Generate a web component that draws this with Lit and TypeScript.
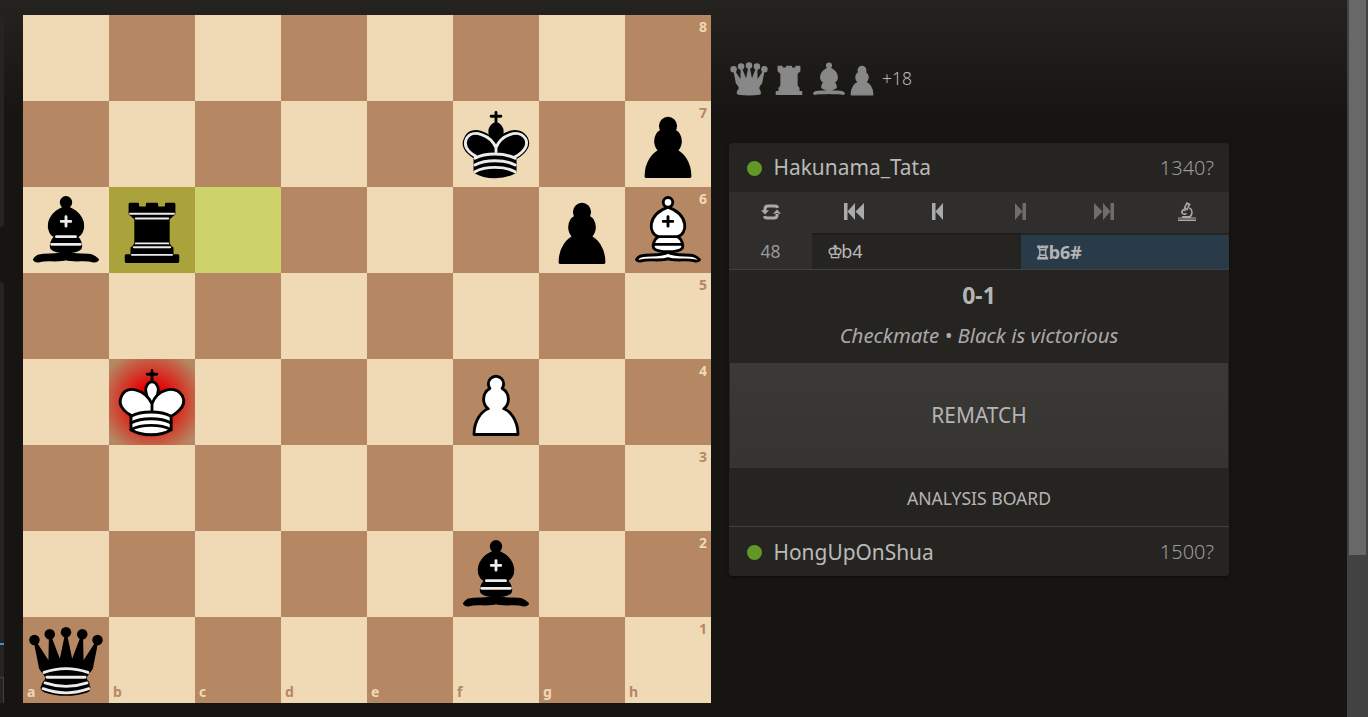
import { LitElement, html, css, svg } from "lit";
import { customElement } from "lit/decorators.js";

const G = (inner: unknown) => svg`<g fill="none" fill-rule="evenodd" stroke="#000" stroke-width="1.5" stroke-linecap="round" stroke-linejoin="round">${inner}</g>`;
const PAWN = "M22.5 9c-2.21 0-4 1.79-4 4 0 .89.29 1.71.78 2.38C17.33 16.5 16 18.59 16 21c0 2.03.94 3.84 2.41 5.03-3 1.06-7.41 5.55-7.41 13.47h23c0-7.92-4.41-12.41-7.41-13.47 1.47-1.19 2.41-3 2.41-5.03 0-2.41-1.33-4.5-3.28-5.62.49-.67.78-1.49.78-2.38 0-2.21-1.79-4-4-4z";
const KH = "M22.5 25s4.5-7.5 3-10.5c0 0-1-2.5-3-2.5s-3 2.5-3 2.5c-1.5 3 3 10.5 3 10.5";
const KB = "M11.5 37c5.5 3.5 15.5 3.5 21 0v-7s9-4.5 6-10.5c-4-6.5-13.5-3.5-16 4V27v-3.5c-3.5-7.5-13-10.5-16-4-3 6 5 10 5 10V37z";
const KL = "M11.5 30c5.5-3 15.5-3 21 0m-21 3.5c5.5-3 15.5-3 21 0m-21 3.5c5.5-3 15.5-3 21 0";
const B1 = "M9 36c3.39-.97 10.11.43 13.5-2 3.39 2.43 10.11 1.03 13.5 2 0 0 1.65.54 3 2-.68.97-1.65.99-3 .5-3.39-.97-10.11.46-13.5-1-3.39 1.46-10.11.03-13.5 1-1.354.49-2.323.47-3-.5 1.354-1.94 3-2 3-2z";
const B2 = "M15 32c2.5 2.5 12.5 2.5 15 0 .5-1.5 0-2 0-2 0-2.5-2.5-4-2.5-4 5.5-1.5 6-11.5-5-15.5-11 4-10.5 14-5 15.5 0 0-2.5 1.5-2.5 4 0 0-.5.5 0 2z";
const B3 = "M25 8a2.5 2.5 0 1 1-5 0 2.5 2.5 0 1 1 5 0z";
const BL = "M17.5 26h10M15 30h15m-7.5-14.5v5M20 18h5";
const R1 = "M9 39h27v-3H9v3zm3.5-7l1.5-2.5h17l1.5 2.5h-20zm-.5 4v-4h21v4H12z";
const R2 = "M14 29.5v-13h17v13H14z";
const R3 = "M14 16.5L11 14h23l-3 2.5H14zM11 14V9h4v2h5V9h5v2h5V9h4v5H11z";
const Q1 = "M9 26c8.5-1.5 21-1.5 27 0l2.5-12.5L31 25l-.3-14.1-5.2 13.6-3-14.5-3 14.5-5.2-13.6L14 25 6.5 13.5 9 26z";
const Q2 = "M9 26c0 2 1.5 2 2.5 4 1 1.5 1 1 .5 3.5-1.5 1-1.5 2.5-1.5 2.5-1.5 1.5.5 2.5.5 2.5 6.5 1 16.5 1 23 0 0 0 1.5-1 0-2.5 0 0 .5-1.5-1-2.5-.5-2.5-.5-2 .5-3.5 1-2 2.5-2 2.5-4-8.5-1.5-18.5-1.5-27 0z";
const QC = [[6, 12], [14, 9], [22.5, 8], [31, 9], [39, 12]];

const pieces: Record<string, unknown> = {
  wP: G(svg`<path d=${PAWN} fill="#fff"/>`),
  bP: G(svg`<path d=${PAWN} fill="#000"/>`),
  wK: G(svg`<path d="M22.5 11.63V6M20 8h5" stroke-linejoin="miter"/><path d=${KH} fill="#fff" stroke-linecap="butt" stroke-linejoin="miter"/><path d=${KB} fill="#fff"/><path d=${KL}/>`),
  bK: G(svg`<path d="M22.5 11.63V6" stroke-linejoin="miter"/><path d=${KH} fill="#000" stroke-linecap="butt" stroke-linejoin="miter"/><path d=${KB} fill="#000"/><path d="M20 8h5" stroke-linejoin="miter"/><path d="M32 29.5s8.5-4 6.03-9.65C34.15 14 25 18 22.5 24.5l.01 2.1-.01-2.1C20 18 9.906 14 6.997 19.85c-2.497 5.65 4.853 9 4.853 9" stroke="#ececec"/><path d=${KL} stroke="#ececec"/>`),
  wB: G(svg`<g fill="#fff" stroke-linecap="butt"><path d=${B1}/><path d=${B2}/><path d=${B3}/></g><path d=${BL} stroke-linejoin="miter"/>`),
  bB: G(svg`<g fill="#000" stroke-linecap="butt"><path d=${B1}/><path d=${B2}/><path d=${B3}/></g><path d=${BL} stroke="#ececec" stroke-linejoin="miter"/>`),
  bR: G(svg`<g fill="#000"><path d=${R1} stroke-linecap="butt"/><path d=${R2} stroke-linecap="butt" stroke-linejoin="miter"/><path d=${R3} stroke-linecap="butt"/></g><path d="M12 35.5h21m-20-4h19m-18-2h17m-17-13h17M11 14h23" fill="none" stroke="#ececec" stroke-width="1" stroke-linejoin="miter"/>`),
  bQ: G(svg`<g fill="#000"><g stroke="none">${QC.map(([x, y]) => svg`<circle cx=${x} cy=${y} r="2.75"/>`)}</g><path d=${Q1} stroke-linecap="butt"/><path d=${Q2} stroke-linecap="butt"/></g><path d="M11 38.5a35 35 1 0 0 23 0" stroke-linecap="butt"/><path d="M11 29a35 35 1 0 1 23 0M12.5 31.5h20M11.5 34.5a35 35 1 0 0 22 0M10.5 37.5a35 35 1 0 0 24 0" stroke="#ececec"/>`),
};

const mono: Record<string, unknown> = {
  q: svg`${QC.map(([x, y]) => svg`<circle cx=${x} cy=${y} r="2.75"/>`)}<path d=${Q1}/><path d=${Q2}/>`,
  r: svg`<path d=${R1}/><path d=${R2}/><path d=${R3}/>`,
  b: svg`<path d=${B1}/><path d=${B2}/><path d=${B3}/>`,
  p: svg`<path d=${PAWN}/>`,
};

const placed: Record<string, string> = {
  f7: "bK", h7: "bP", a6: "bB", b6: "bR", g6: "bP", h6: "wB",
  b4: "wK", f4: "wP", f2: "bB", a1: "bQ",
};
const FILES = "abcdefgh";

@customElement("app-root")
export class AppRoot extends LitElement {
  static styles = css`
    :host { display: block; width: 1368px; height: 717px; overflow: hidden; font-family: "Noto Sans", sans-serif; color: #bababa; }
    .page { display: flex; height: 717px; background: linear-gradient(to bottom, #25231f, #161512 116px); }
    .main { flex: 1; display: flex; min-width: 0; }
    .side { width: 4px; padding-top: 15px; margin-right: 19px; display: flex; flex-direction: column; }
    .s1 { height: 212px; background: #262421; border-radius: 0 3px 3px 0; }
    .s2 { height: 421px; margin-top: 55px; background: #262421; border-radius: 0 3px 3px 0; display: flex; flex-direction: column; }
    .s2a { height: 361px; }
    .s2b { height: 2px; background: #3692e7; }
    .s2c { height: 32px; }
    .s2d { flex: 1; border-top: 1px solid #404040; border-right: 1px solid #404040; }
    .board { margin-top: 15px; width: 688px; height: 688px; display: grid; grid-template-columns: repeat(8, 86px); grid-template-rows: repeat(8, 86px); flex: none; }
    .sq { position: relative; }
    .l { background: #f0d9b5; }
    .d { background: #b58863; }
    .lm.l { background: #cdd26a; }
    .lm.d { background: #aaa23a; }
    .d.check { background: radial-gradient(ellipse at center, rgb(255,0,0) 0%, rgb(231,0,0) 25%, rgba(169,0,0,0) 89%, rgba(158,0,0,0) 100%), #b58863; }
    .sq svg { display: block; width: 86px; height: 86px; }
    .co { position: absolute; font-size: 14px; line-height: 14px; font-weight: 700; }
    .co.rk { top: 5px; right: 4px; }
    .co.fl { bottom: 4px; left: 4px; }
    .l .co { color: #b58863; }
    .d .co { color: #f0d9b5; }
    .right { margin-left: 18px; width: 500px; flex: none; padding-top: 58px; }
    .material { height: 42px; margin-bottom: 43px; display: flex; align-items: center; }
    .material svg { width: 42px; height: 42px; flex: none; fill: #888; stroke: #888; stroke-width: 1.5; stroke-linejoin: round; }
    .m1 { margin-left: -1px; }
    .m2 { margin-left: -2px; }
    .m3 { margin-left: -2px; }
    .m4 { margin-left: -9px; }
    .diff { margin: 0 0 2px -1px; font-size: 17.5px; font-weight: 300; color: #b9b9b9; }
    .panel { background: #262421; border-radius: 4px; box-shadow: 0 2px 2px rgba(0,0,0,.14), 0 3px 1px -2px rgba(0,0,0,.2), 0 1px 5px rgba(0,0,0,.12); }
    .user { height: 49px; padding: 0 15px 0 18px; display: flex; align-items: center; }
    .dot { width: 15px; height: 15px; border-radius: 50%; background: #629924; margin: 2px 11.5px 0 0; flex: none; }
    .name { flex: 1; font-size: 20.9px; color: #bababa; }
    .user.top .name { margin-top: -2px; }
    .rating { font-size: 20px; font-weight: 300; color: #999; }
    .ctrl { height: 41px; padding-bottom: 2px; box-sizing: border-box; background: #302e2c; display: flex; }
    .ctrl div { flex: 1; display: flex; align-items: center; justify-content: center; }
    .ctrl svg { display: block; fill: #aaa; }
    .ctrl .off svg { fill: #6e6d6b; }
    .moves { height: 36px; display: grid; grid-template-columns: 83px 1fr 1fr; border-bottom: 1px solid #404040; box-sizing: content-box; }
    .idx { background: #302e2c; display: flex; align-items: center; justify-content: center; font-size: 17.5px; color: #999; font-weight: 400; }
    .mv { display: flex; align-items: center; padding-left: 15px; font-size: 18px; box-shadow: inset 0 3px 2px -2px rgba(0,0,0,.35); }
    .mv.act { background: #293a49; font-weight: 700; color: #b4b4b4; padding-left: 14px; box-shadow: none; margin-top: 2px; }
    .fig { font-family: "DejaVu Sans", sans-serif; font-size: 18px; font-weight: 400; margin-right: -2px; -webkit-text-stroke: .4px currentColor; }
    .mv.act .fig { -webkit-text-stroke: .8px currentColor; }
    .res { height: 93px; text-align: center; }
    .score { padding-top: 11px; font-size: 23px; line-height: 28px; font-weight: 700; color: #b4b4b4; }
    .status { margin-top: 14px; font-size: 20.4px; line-height: 24px; font-style: italic; color: #aaa; }
    .rematch { margin: 0 1px; height: 105px; padding-bottom: 1px; box-sizing: border-box; background: linear-gradient(#3b3935, #363431); display: flex; align-items: center; justify-content: center; font-size: 20.9px; color: #b4b4b4; }
    .analysis { height: 59px; padding-top: 2px; box-sizing: border-box; display: flex; align-items: center; justify-content: center; font-size: 17.6px; color: #b4b4b4; border-bottom: 1px solid #404040; }
    .scroll { width: 21px; background: #424242; flex: none; }
    .thumb { margin: 0 2px; height: 555px; background: #686868; }
  `;

  private square(file: number, rank: number) {
    const id = FILES[file] + rank;
    const dark = (file + rank) % 2 === 1;
    const cls = ["sq", dark ? "d" : "l"];
    if (id === "b6" || id === "c6") cls.push("lm");
    if (id === "b4") cls.push("check");
    const p = placed[id];
    return html`<div class=${cls.join(" ")}>
      ${p ? html`<svg viewBox="0 0 45 45">${pieces[p]}</svg>` : ""}
      ${file === 7 ? html`<span class="co rk">${rank}</span>` : ""}
      ${rank === 1 ? html`<span class="co fl">${FILES[file]}</span>` : ""}
    </div>`;
  }

  private user(name: string, rating: string, top = false) {
    return html`<div class="user ${top ? "top" : ""}"><span class="dot"></span><span class="name">${name}</span><span class="rating">${rating}</span></div>`;
  }

  render() {
    const squares = [];
    for (let r = 8; r >= 1; r--) for (let f = 0; f < 8; f++) squares.push(this.square(f, r));
    return html`<div class="page">
      <div class="main">
        <div class="side">
          <div class="s1"></div>
          <div class="s2"><div class="s2a"></div><div class="s2b"></div><div class="s2c"></div><div class="s2d"></div></div>
        </div>
        <div class="board">${squares}</div>
        <div class="right">
          <div class="material">
            <svg class="m1" viewBox="0 0 45 45">${mono.q}</svg>
            <svg class="m2" viewBox="0 0 45 45">${mono.r}</svg>
            <svg class="m3" viewBox="0 0 45 45">${mono.b}</svg>
            <svg class="m4" viewBox="0 0 45 45">${mono.p}</svg>
            <span class="diff">+18</span>
          </div>
          <div class="panel">
            ${this.user("Hakunama_Tata", "1340?", true)}
            <div class="ctrl">
              <div><svg width="20" height="18" viewBox="0 0 20 18"><path d="M2.5 8V6Q2.5 1.5 7 1.5H14Q17.5 1.5 18 4.5L15 5.2Q14.8 4.5 14 4.5H7Q5.5 4.5 5.5 6V8ZM17.5 10V12Q17.5 16.5 13 16.5H6Q2.5 16.5 2 13.5L5 12.8Q5.2 13.5 6 13.5H13Q14.5 13.5 14.5 12V10ZM0 7.3H8L4 11.5ZM12 10.7H20L16 6.5Z"/></svg></div>
              <div><svg width="20" height="17" viewBox="0 0 20 17"><path d="M0 0H3.5V17H0ZM11 0V17L3.5 8.5ZM20 0V17L11.5 8.5Z"/></svg></div>
              <div><svg width="11" height="17" viewBox="0 0 11 17"><path d="M0 0H3.5V17H0ZM11 0V17L3.5 8.5Z"/></svg></div>
              <div class="off"><svg width="11" height="17" viewBox="0 0 11 17"><path d="M11 0H7.5V17H11ZM0 0V17L7.5 8.5Z"/></svg></div>
              <div class="off"><svg width="20" height="17" viewBox="0 0 20 17"><path d="M20 0H16.5V17H20ZM9 0V17L16.5 8.5ZM0 0V17L8.5 8.5Z"/></svg></div>
              <div><svg width="18" height="19" viewBox="0 0 18 19"><path d="M8.6 0 12.6 2 9.4 8.6 5.4 6.6ZM9.2 2.3 7.6 5.8 8.8 6.4 10.4 2.9Z"/><path d="M11.8 5.3C15.5 7.5 15.6 12.6 12.6 15.4H18V16.6H0V15.4H4.2V14H11.2C14 12 14 8 10.9 6.7ZM3.5 8.5A2.5 2.5 0 0 1 8 8.2L7.3 9.6A1.2 1.2 0 0 0 4.9 10.2 1.2 1.2 0 0 0 7 11L9 11.2A2.6 2.6 0 0 1 3.5 8.5ZM0 17.6H18V19H0Z"/></svg></div>
            </div>
            <div class="moves">
              <div class="idx">48</div>
              <div class="mv"><span class="fig">♔</span>b4</div>
              <div class="mv act"><span class="fig">♖</span>b6#</div>
            </div>
            <div class="res">
              <div class="score">0-1</div>
              <div class="status">Checkmate • Black is victorious</div>
            </div>
            <div class="rematch">REMATCH</div>
            <div class="analysis">ANALYSIS BOARD</div>
            ${this.user("HongUpOnShua", "1500?")}
          </div>
        </div>
      </div>
      <div class="scroll"><div class="thumb"></div></div>
    </div>`;
  }
}
